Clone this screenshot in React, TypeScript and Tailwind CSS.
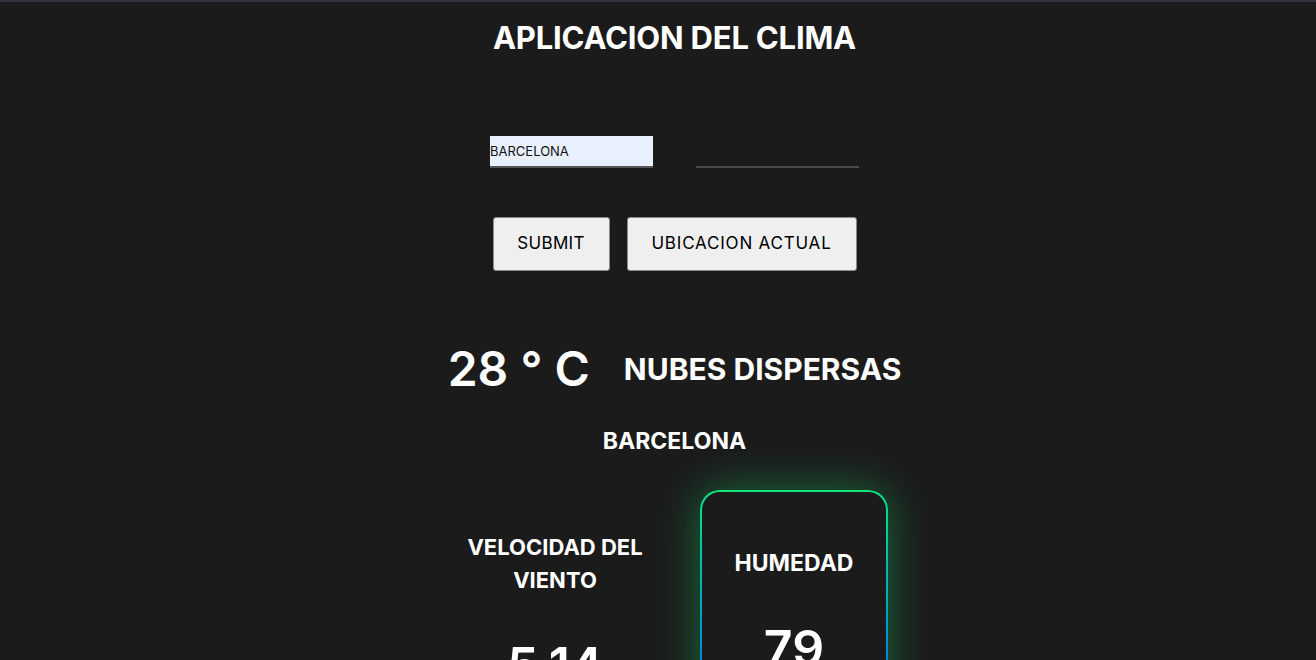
import React from "react";

const font = { fontFamily: "Inter, 'Noto Sans', sans-serif" };

export default function App() {
  return (
    <div className="min-h-[660px] w-full bg-[#1b1b1b] text-white" style={font}>
      <div className="h-[2px] w-full bg-[#33323e]" />
      <div className="flex flex-col items-center pl-[33px]">
        <h1 className="mt-[16px] text-[31px] font-bold leading-[40px] tracking-[-0.2px]">APLICACION DEL CLIMA</h1>

        <div className="mt-[78px] flex items-end gap-[43px]">
          <input
            defaultValue="BARCELONA"
            className="h-[32px] w-[163px] border-b-2 border-[#555] bg-[#e8f0fe] px-0 text-[13px] text-[#111] outline-none"
          />
          <input className="h-[32px] w-[163px] border-b-2 border-[#4a4a4a] bg-transparent outline-none" />
        </div>

        <div className="mt-[49px] flex gap-[17px]">
          <button className="h-[54px] w-[117px] rounded-[3px] border border-[#8a8a8a] bg-[#efefef] text-[17px] tracking-[0.3px] text-black">
            SUBMIT
          </button>
          <button className="h-[54px] w-[230px] rounded-[3px] border border-[#8a8a8a] bg-[#efefef] text-[17px] tracking-[0.8px] text-black">
            UBICACION ACTUAL
          </button>
        </div>

        <div className="mt-[68px] flex items-center gap-[34px]">
          <span className="text-[48px] font-semibold leading-[60px]">28 ° C</span>
          <span className="text-[30px] font-bold leading-[40px]">NUBES DISPERSAS</span>
        </div>

        <div className="mt-[27px] text-[23px] font-bold leading-[30px]">BARCELONA</div>

        <div className="mt-[34px] flex gap-[51px]">
          <div className="flex w-[188px] flex-col items-center pt-[41px] text-center">
            <div className="text-[22px] font-bold leading-[33px]">
              VELOCIDAD DEL
              <br />
              VIENTO
            </div>
            <div className="mt-[38px] text-[50px] font-semibold leading-[60px]">5.14</div>
          </div>
          <div className="rounded-[20px] bg-gradient-to-b from-[#12e57b] to-[#2b4df0] p-[2px] shadow-[0_0_45px_rgba(20,230,110,0.4)]">
            <div className="flex h-[240px] w-[184px] flex-col items-center rounded-[18px] bg-[#1b1b1b] pt-[56px]">
              <div className="text-[23px] font-bold leading-[30px]">HUMEDAD</div>
              <div className="mt-[40px] text-[50px] font-semibold leading-[60px]">79</div>
            </div>
          </div>
        </div>
      </div>
    </div>
  );
}
